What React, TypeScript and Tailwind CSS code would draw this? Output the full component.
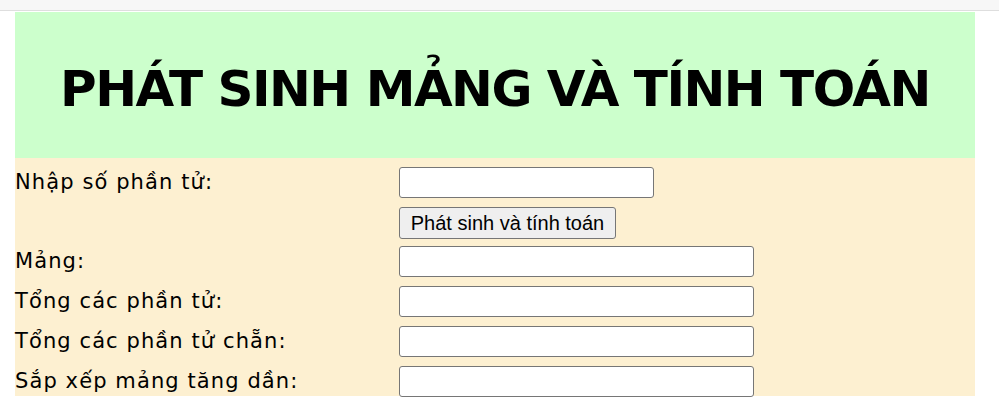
const rows = ["Mảng:", "Tổng các phần tử:", "Tổng các phần tử chẵn:", "Sắp xếp mảng tăng dần:"];

export default function App() {
  return (
    <div className="min-h-[416px] bg-white">
      <div className="h-[11px] bg-[#f7f7f7] border-b border-[#dedede]" />
      <div className="ml-[15px] mt-px w-[960px]">
        <div className="h-[146px] bg-[#ccffcc] flex items-center justify-center pt-[8px]">
          <h1 className="font-['DejaVu_Sans',Tahoma,sans-serif] font-bold text-[50px] tracking-[-1.5px] leading-none text-black">
            PHÁT SINH MẢNG VÀ TÍNH TOÁN
          </h1>
        </div>
        <div className="h-[238px] bg-[#fdf0d1] pt-[9px] font-['DejaVu_Sans',Tahoma,sans-serif] text-[21px] tracking-[1.1px] text-black">
          <div className="flex items-center h-[31px]">
            <label className="w-[384px]">Nhập số phần tử:</label>
            <input className="w-[255px] h-[31px] bg-white border border-[#767676] rounded-[3px]" />
          </div>
          <div className="flex items-center h-[32px] mt-[9px]">
            <div className="w-[384px]" />
            <button className="w-[217px] h-[32px] bg-[#efefef] border border-[#767676] rounded-[3px] font-['Liberation_Sans',Arial,sans-serif] text-[20px] tracking-normal leading-none">
              Phát sinh và tính toán
            </button>
          </div>
          <div className="mt-[7px] flex flex-col gap-[9px]">
            {rows.map((r) => (
              <div key={r} className="flex items-center h-[31px]">
                <label className="w-[384px]">{r}</label>
                <input className="w-[355px] h-[31px] bg-white border border-[#767676] rounded-[3px]" />
              </div>
            ))}
          </div>
        </div>
      </div>
    </div>
  );
}
